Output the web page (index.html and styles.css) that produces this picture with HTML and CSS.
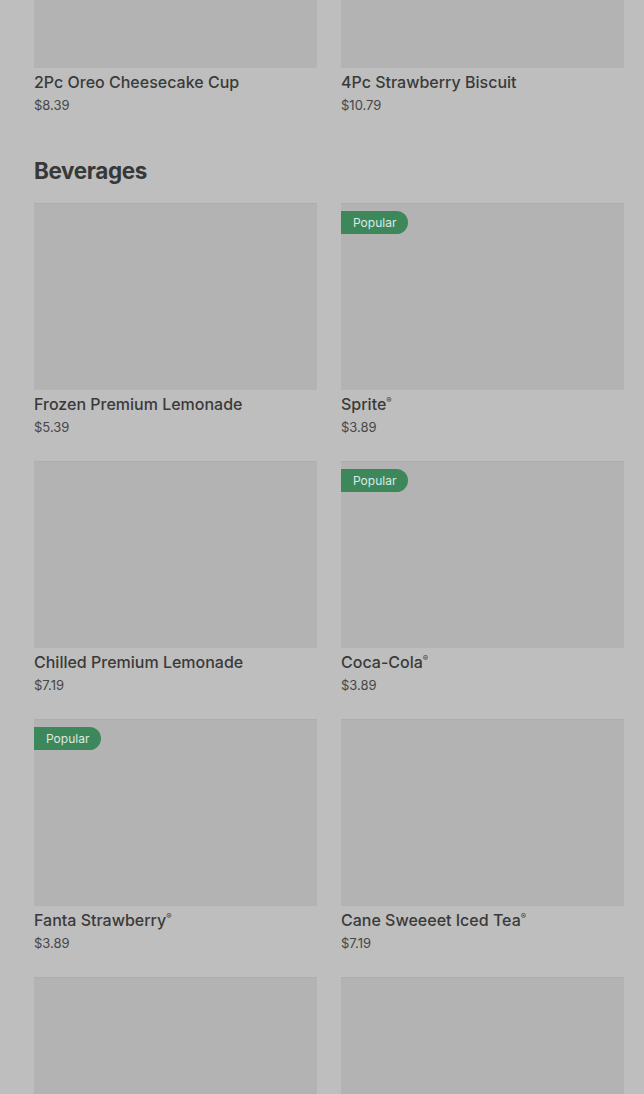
FILE: index.html
```html
<!DOCTYPE html>
<html>
<head>
<meta charset="utf-8">
<link rel="stylesheet" href="styles.css">
</head>
<body>
<div class="page">
  <section class="grid top">
    <div class="card">
      <div class="thumb"></div>
      <div class="name">2Pc Oreo Cheesecake Cup</div>
      <div class="price">$8.39</div>
    </div>
    <div class="card">
      <div class="thumb"></div>
      <div class="name">4Pc Strawberry Biscuit</div>
      <div class="price">$10.79</div>
    </div>
  </section>

  <h2 class="heading">Beverages</h2>

  <section class="grid">
    <div class="card">
      <div class="thumb"></div>
      <div class="name">Frozen Premium Lemonade</div>
      <div class="price">$5.39</div>
    </div>
    <div class="card">
      <div class="thumb"><span class="badge">Popular</span></div>
      <div class="name">Sprite<sup>®</sup></div>
      <div class="price">$3.89</div>
    </div>
    <div class="card">
      <div class="thumb"></div>
      <div class="name">Chilled Premium Lemonade</div>
      <div class="price">$7.19</div>
    </div>
    <div class="card">
      <div class="thumb"><span class="badge">Popular</span></div>
      <div class="name">Coca-Cola<sup>®</sup></div>
      <div class="price">$3.89</div>
    </div>
    <div class="card">
      <div class="thumb"><span class="badge">Popular</span></div>
      <div class="name">Fanta Strawberry<sup>®</sup></div>
      <div class="price">$3.89</div>
    </div>
    <div class="card">
      <div class="thumb"></div>
      <div class="name">Cane Sweeeet Iced Tea<sup>®</sup></div>
      <div class="price">$7.19</div>
    </div>
    <div class="card">
      <div class="thumb"></div>
    </div>
    <div class="card">
      <div class="thumb"></div>
    </div>
  </section>
</div>
</body>
</html>
```

FILE: styles.css
```css
html, body {
  margin: 0;
  padding: 0;
  background: #bebebe;
  height: 100%;
  overflow: hidden;
}
body {
  font-family: Inter, "Liberation Sans", sans-serif;
  color: #3a3a3a;
}
.page {
  padding: 0 20px 0 34px;
  margin-top: -119px;
}
.grid {
  display: grid;
  grid-template-columns: 283px 283px;
  column-gap: 24px;
  row-gap: 22px;
}
.card {
  display: flex;
  flex-direction: column;
}
.thumb {
  position: relative;
  height: 187px;
  background: #b3b3b3;
  box-shadow: inset 0 1px 0 #adadad;
}
.badge {
  position: absolute;
  left: 0;
  top: 8px;
  height: 23px;
  line-height: 23px;
  padding: 0 12px;
  background: #3d885b;
  color: #dfe9e3;
  font-size: 12px;
  font-weight: 400;
  border-radius: 0 12px 12px 0;
}
.name {
  margin-top: 3px;
  font-size: 16px;
  line-height: 22px;
  font-weight: 500;
  color: #3a3a3a;
}
.name sup {
  font-size: 8px;
  line-height: 0;
  vertical-align: 7px;
  margin-left: 0;
}
.price {
  font-size: 13px;
  line-height: 24px;
  color: #474747;
}
.heading {
  margin: 39px 0 17px;
  font-size: 22.5px;
  line-height: 30px;
  font-weight: 700;
  letter-spacing: -0.4px;
  color: #383838;
}
```
